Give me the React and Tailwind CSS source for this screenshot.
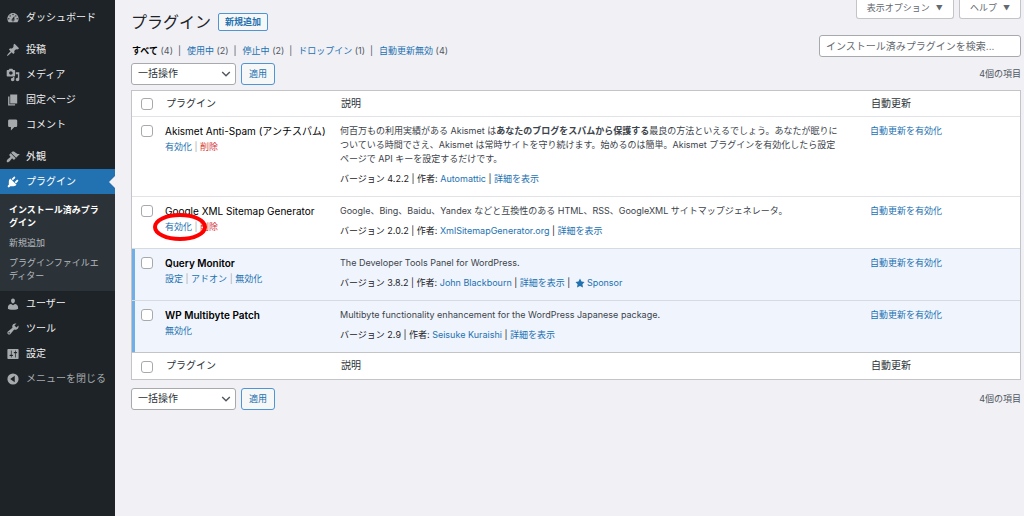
import clsx from "clsx";

const ICONS = {
  dashboard:
    "M3.76 16h12.48c1.1-1.37 1.76-3.11 1.76-5 0-4.42-3.58-8-8-8s-8 3.58-8 8c0 1.89.66 3.63 1.76 5zM10 4c.55 0 1 .45 1 1s-.45 1-1 1-1-.45-1-1 .45-1 1-1zM6 6c.55 0 1 .45 1 1s-.45 1-1 1-1-.45-1-1 .45-1 1-1zm8 0c.55 0 1 .45 1 1s-.45 1-1 1-1-.45-1-1 .45-1 1-1zm-5.37 5.55L12 7v6c0 1.1-.9 2-2 2s-2-.9-2-2c0-.57.24-1.08.63-1.45zM4 10c.55 0 1 .45 1 1s-.45 1-1 1-1-.45-1-1 .45-1 1-1zm12 0c.55 0 1 .45 1 1s-.45 1-1 1-1-.45-1-1 .45-1 1-1zm-5 3c0-.55-.45-1-1-1s-1 .45-1 1 .45 1 1 1 1-.45 1-1z",
  post: "M10.44 3.02l1.82-1.82 6.36 6.35-1.83 1.82c-1.05-.68-2.48-.57-3.41.36l-.75.75c-.92.93-1.04 2.35-.35 3.41l-1.83 1.82-2.41-2.41-2.8 2.79c-.42.42-3.38 2.71-3.8 2.29s1.86-3.39 2.28-3.81l2.79-2.79L4.1 9.36l1.83-1.82c1.05.69 2.48.57 3.4-.36l.75-.75c.93-.92 1.05-2.35.36-3.41z",
  media:
    "M13 11V4c0-.55-.45-1-1-1h-1.67L9 1H5L3.67 3H2c-.55 0-1 .45-1 1v7c0 .55.45 1 1 1h10c.55 0 1-.45 1-1zM7 4.5c1.38 0 2.5 1.12 2.5 2.5S8.38 9.5 7 9.5 4.5 8.38 4.5 7 5.62 4.5 7 4.5zM14 6h5v10.5c0 1.38-1.12 2.5-2.5 2.5S14 17.88 14 16.5s1.12-2.5 2.5-2.5c.17 0 .34.02.5.05V9h-3V6zm-4 8.05V13h2v3.5c0 1.38-1.12 2.5-2.5 2.5S7 17.88 7 16.5 8.12 14 9.5 14c.17 0 .34.02.5.05z",
  page: "M6 15V2h10v13H6zm-1 1h8v2H3V5h2v11z",
  comment:
    "M5 2h9c1.1 0 2 .9 2 2v7c0 1.1-.9 2-2 2h-2l-5 5v-5H5c-1.1 0-2-.9-2-2V4c0-1.1.9-2 2-2z",
  appearance:
    "M14.48 11.06L7.41 3.99l1.5-1.5c.5-.56 2.3-.47 3.51.32 1.21.8 1.43 1.28 2.91 2.1 1.18.64 2.45 1.26 4.45.85zm-.71.71L6.7 4.7 4.93 6.47c-.39.39-.39 1.02 0 1.41l1.06 1.06c.39.39.39 1.03 0 1.42-.6.6-1.43 1.11-2.21 1.69-.35.26-.7.53-1.01.84C1.43 14.23.4 16.08 1.4 17.07c.99 1 2.84-.03 4.18-1.36.31-.31.58-.66.85-1.02.57-.78 1.08-1.61 1.69-2.21.39-.39 1.02-.39 1.41 0l1.06 1.06c.39.39 1.02.39 1.41 0z",
  plugins:
    "M13.11 4.36L9.87 7.6 8 5.73l3.24-3.24c.35-.34 1.05-.2 1.56.32.52.51.66 1.21.31 1.55zm-8 1.77l.91-1.12 9.01 9.01-1.19.84c-.71.71-2.63 1.16-3.82 1.16H6.14L4.9 17.26c-.59.59-1.54.59-2.12 0-.59-.58-.59-1.53 0-2.12l1.24-1.24v-3.88c0-1.13.4-3.19 1.09-3.89zm7.26 3.97l3.24-3.24c.34-.35 1.04-.21 1.55.31.52.51.66 1.21.31 1.55l-3.24 3.25z",
  users:
    "M10 9.25c-2.27 0-2.73-3.44-2.73-3.44C7 4.02 7.82 2 9.97 2c2.16 0 2.98 2.02 2.71 3.81 0 0-.41 3.44-2.68 3.44zm0 2.57L12.72 10c2.39 0 4.52 2.33 4.52 4.53v2.49s-3.65 1.13-7.24 1.13c-3.65 0-7.24-1.13-7.24-1.13v-2.49c0-2.25 1.94-4.48 4.47-4.48z",
  tools:
    "M16.68 9.77c-1.34 1.34-3.3 1.67-4.95.99l-5.41 6.52c-.99.99-2.59.99-3.58 0s-.99-2.59 0-3.57l6.52-5.42c-.68-1.65-.35-3.61.99-4.95 1.28-1.28 3.12-1.62 4.72-1.06l-2.89 2.89 2.82 2.82 2.86-2.87c.53 1.58.18 3.39-1.08 4.65zM3.81 16.21c.4.39 1.04.39 1.43 0 .4-.4.4-1.04 0-1.43-.39-.4-1.03-.4-1.43 0-.39.39-.39 1.03 0 1.43z",
  settings:
    "M18 16V4c0-.55-.45-1-1-1H3c-.55 0-1 .45-1 1v12c0 .55.45 1 1 1h14c.55 0 1-.45 1-1zM8 11h1c.55 0 1 .45 1 1s-.45 1-1 1H8v1.5c0 .28-.22.5-.5.5s-.5-.22-.5-.5V13H6c-.55 0-1-.45-1-1s.45-1 1-1h1V5.5c0-.28.22-.5.5-.5s.5.22.5.5V11zm5-2h-1c-.55 0-1-.45-1-1s.45-1 1-1h1V5.5c0-.28.22-.5.5-.5s.5.22.5.5V7h1c.55 0 1 .45 1 1s-.45 1-1 1h-1v5.5c0 .28-.22.5-.5.5s-.5-.22-.5-.5V9z",
  collapse: "M10 2a8 8 0 1 0 0 16 8 8 0 0 0 0-16zM12.5 5.5v9L6 10z",
  star: "M10 1l3 6 6 .75-4.12 4.62L16 19l-6-3-6 3 1.13-6.63L1 7.75 7 7z",
};

const MENU = [
  [["dashboard", "ダッシュボード"]],
  [
    ["post", "投稿"],
    ["media", "メディア"],
    ["page", "固定ページ"],
    ["comment", "コメント"],
  ],
  [
    ["appearance", "外観"],
    ["plugins", "プラグイン"],
    ["users", "ユーザー"],
    ["tools", "ツール"],
    ["settings", "設定"],
  ],
];

const SUBMENU = ["インストール済みプラグイン", "新規追加", "プラグインファイルエディター"];

const FILTERS = [
  ["すべて", 4],
  ["使用中", 2],
  ["停止中", 2],
  ["ドロップイン", 1],
  ["自動更新無効", 4],
];

const PLUGINS = [
  {
    name: "Akismet Anti-Spam (アンチスパム)",
    actions: ["有効化", "削除"],
    description: (
      <>
        何百万もの利用実績がある Akismet は<strong>あなたのブログをスパムから保護する</strong>
        最良の方法といえるでしょう。あなたが眠りについている時間でさえ、Akismet
        は常時サイトを守り続けます。始めるのは簡単。Akismet
        プラグインを有効化したら設定ページで API キーを設定するだけです。
      </>
    ),
    version: "4.2.2",
    author: "Automattic",
  },
  {
    name: "Google XML Sitemap Generator",
    actions: ["有効化", "削除"],
    circled: "有効化",
    description:
      "Google、Bing、Baidu、Yandex などと互換性のある HTML、RSS、GoogleXML サイトマップジェネレータ。",
    version: "2.0.2",
    author: "XmlSitemapGenerator.org",
  },
  {
    name: "Query Monitor",
    active: true,
    actions: ["設定", "アドオン", "無効化"],
    description: "The Developer Tools Panel for WordPress.",
    version: "3.8.2",
    author: "John Blackbourn",
    sponsor: true,
  },
  {
    name: "WP Multibyte Patch",
    active: true,
    actions: ["無効化"],
    description: "Multibyte functionality enhancement for the WordPress Japanese package.",
    version: "2.9",
    author: "Seisuke Kuraishi",
  },
];

function Icon({ name, className }) {
  return (
    <svg viewBox="0 0 20 20" fill="currentColor" fillRule="evenodd" aria-hidden="true" className={className}>
      <path d={ICONS[name]} />
    </svg>
  );
}

function Link({ children, className = "text-[#2271b1]" }) {
  return (
    <a href="#" className={className}>
      {children}
    </a>
  );
}

function Sidebar() {
  return (
    <nav className="w-[115px] shrink-0 bg-[#1d2327] pt-[5px] text-[10px] text-[#f0f0f1]">
      {MENU.map((group, i) => (
        <ul key={i} className={clsx(i > 0 && "mt-[7px]")}>
          {group.map(([icon, label]) => {
            const current = icon === "plugins";
            return (
              <li key={icon}>
                <a
                  href="#"
                  className={clsx(
                    "relative flex h-[25px] items-center gap-1.5 pl-1.5",
                    current && "bg-[#2271b1] text-white",
                  )}
                >
                  <Icon name={icon} className={clsx("size-3.5", current ? "text-white" : "text-[#a7aaad]")} />
                  {label}
                  {current && (
                    <span className="absolute right-0 border-y-6 border-r-6 border-y-transparent border-r-[#f0f0f5]" />
                  )}
                </a>
                {current && (
                  <ul className="flex flex-col gap-[7px] bg-[#2c3338] px-[9px] py-[9px] text-[9px] leading-[13px] text-[#b4b9be]">
                    {SUBMENU.map((item, n) => (
                      <li key={item}>
                        <Link className={clsx(n === 0 && "font-semibold text-white")}>{item}</Link>
                      </li>
                    ))}
                  </ul>
                )}
              </li>
            );
          })}
        </ul>
      ))}
      <button type="button" className="flex h-[25px] items-center gap-1.5 pl-1.5 text-[#a7aaad]">
        <Icon name="collapse" className="size-3.5" />
        メニューを閉じる
      </button>
    </nav>
  );
}

function ScreenTab({ children }) {
  return (
    <button
      type="button"
      className="flex h-[19px] items-center gap-1.5 rounded-b-[3px] border border-t-0 border-[#c3c4c7] bg-white px-2.5 pb-0.5 text-[9px] text-[#646970]"
    >
      {children}
      <span className="pt-0.5 text-[7px]">▼</span>
    </button>
  );
}

function TableNav({ label }) {
  return (
    <div className="flex items-center justify-between">
      <div className="flex gap-[5px]">
        <div className="relative">
          <select
            aria-label={label}
            className="block h-[22px] w-[105px] appearance-none rounded-[3px] border border-[#a7aaad] bg-white pl-1.5 text-[10px] text-[#2c3338]"
          >
            <option>一括操作</option>
          </select>
          <svg
            viewBox="0 0 10 10"
            fill="none"
            stroke="#50575e"
            strokeWidth="1.4"
            className="pointer-events-none absolute top-1.5 right-[5px] size-2.5"
          >
            <path d="M1.2 3L5 6.8 8.8 3" />
          </svg>
        </div>
        <button
          type="button"
          className="h-[22px] rounded-[3px] border border-[#4f94d4] bg-[#f6f7f7] px-[7px] text-[9px] text-[#2271b1]"
        >
          適用
        </button>
      </div>
      <span className="text-[9px] text-[#50575e]">4個の項目</span>
    </div>
  );
}

function CheckBox({ label }) {
  return (
    <input
      type="checkbox"
      aria-label={label}
      className="block size-3 appearance-none rounded-[3px] border border-[#a7aaad] bg-white"
    />
  );
}

function HeadingCells() {
  return (
    <tr className="h-[26px] text-left text-[10px] text-[#2c3338]">
      <th className="pt-0.5 pl-[9px]">
        <CheckBox label="すべて選択" />
      </th>
      <th className="pl-2 font-normal">プラグイン</th>
      <th className="pl-2 font-normal">説明</th>
      <th className="pl-2 font-normal">自動更新</th>
    </tr>
  );
}

function Action({ name, circled }) {
  return (
    <span className="relative">
      <Link className={name === "削除" ? "text-[#d63638]" : "text-[#2271b1]"}>{name}</Link>
      {circled && (
        <svg
          viewBox="0 0 54 30"
          fill="none"
          stroke="#ff0000"
          strokeWidth="4"
          className="pointer-events-none absolute -top-2 -left-3 z-10 h-[30px] w-[54px] max-w-none"
        >
          <ellipse cx="27" cy="14" rx="25" ry="12" />
        </svg>
      )}
    </span>
  );
}

function PluginRow({ plugin }) {
  const { name, active, actions, circled, description, version, author, sponsor } = plugin;
  return (
    <tr
      className={clsx(
        "border-t align-top text-[9px] leading-[14px]",
        active ? "border-[#d5dbe2] bg-[#f0f5fd]" : "border-[#e2e3e6]",
      )}
    >
      <td className={clsx("pt-2 pl-[9px]", active && "shadow-[inset_3px_0_#72aee6]")}>
        <CheckBox label={`${name}を選択`} />
      </td>
      <td className="pt-[7px] pl-[7px]">
        <div className={clsx("text-[10px] whitespace-nowrap text-black", active ? "font-semibold" : "font-normal")}>
          {name}
        </div>
        <div className="mt-0.5 text-[#a7aaad]">
          {actions.map((action, i) => (
            <span key={action}>
              {i > 0 && " | "}
              <Action name={action} circled={action === circled} />
            </span>
          ))}
        </div>
      </td>
      <td className="pt-[7px] pr-[22px] pb-2.5 pl-[7px]">
        <p className="text-[#3c434a]">{description}</p>
        <p className="mt-1.5 text-[#1d2327]">
          バージョン {version} | 作者: <Link>{author}</Link> | <Link>詳細を表示</Link>
          {sponsor && (
            <>
              {" | "}
              <Link>
                <Icon name="star" className="mx-0.5 mb-0.5 inline size-2.5" />
                Sponsor
              </Link>
            </>
          )}
        </p>
      </td>
      <td className="pt-[7px] pl-[7px]">
        <Link>自動更新を有効化</Link>
      </td>
    </tr>
  );
}

export default function App() {
  return (
    <div
      lang="ja"
      className="flex min-h-screen bg-[#f0f0f5] font-[Inter,'Noto_Sans_CJK_JP',sans-serif] text-[#3c434a]"
    >
      <Sidebar />
      <main className="min-w-0 flex-1 pr-[3px] pl-4">
        <header className="flex h-[34px] items-start justify-between">
          <div className="flex items-center gap-[7px] pt-[9px]">
            <h1 className="text-[16px] leading-[26px] text-[#1d2327]">プラグイン</h1>
            <a
              href="#"
              className="rounded-[2px] border border-[#4f94d4] bg-[#f6f7f7] px-1.5 text-[9px] leading-4 font-semibold text-[#2271b1]"
            >
              新規追加
            </a>
          </div>
          <div className="flex gap-[5px]">
            <ScreenTab>表示オプション</ScreenTab>
            <ScreenTab>ヘルプ</ScreenTab>
          </div>
        </header>

        <div className="mb-[5px] flex items-center justify-between">
          <ul className="flex gap-[5px] pt-2.5 pl-px text-[9px] text-[#50575e]">
            {FILTERS.map(([label, count], i) => (
              <li key={label}>
                {i > 0 && <span className="mr-1.5">|</span>}
                <Link className={i === 0 ? "font-bold text-black" : "text-[#2271b1]"}>{label}</Link> ({count})
              </li>
            ))}
          </ul>
          <input
            type="search"
            aria-label="インストール済みプラグインを検索"
            placeholder="インストール済みプラグインを検索..."
            className="h-[22px] w-[202px] rounded-[3px] border border-[#a7aaad] bg-white px-1.5 text-[10px] placeholder:text-[#646970]"
          />
        </div>

        <TableNav label="一括操作を選択" />

        <div className="mt-[5px] mb-2 border border-[#c3c4c7] bg-white">
          <table className="w-full table-fixed border-collapse">
            <colgroup>
              <col className="w-[26px]" />
              <col className="w-[175px]" />
              <col />
              <col className="w-[157px]" />
            </colgroup>
            <thead>
              <HeadingCells />
            </thead>
            <tbody>
              {PLUGINS.map((plugin) => (
                <PluginRow key={plugin.name} plugin={plugin} />
              ))}
            </tbody>
            <tfoot className="border-t border-[#c3c4c7]">
              <HeadingCells />
            </tfoot>
          </table>
        </div>

        <TableNav label="一括操作を選択 (下部)" />
      </main>
    </div>
  );
}
